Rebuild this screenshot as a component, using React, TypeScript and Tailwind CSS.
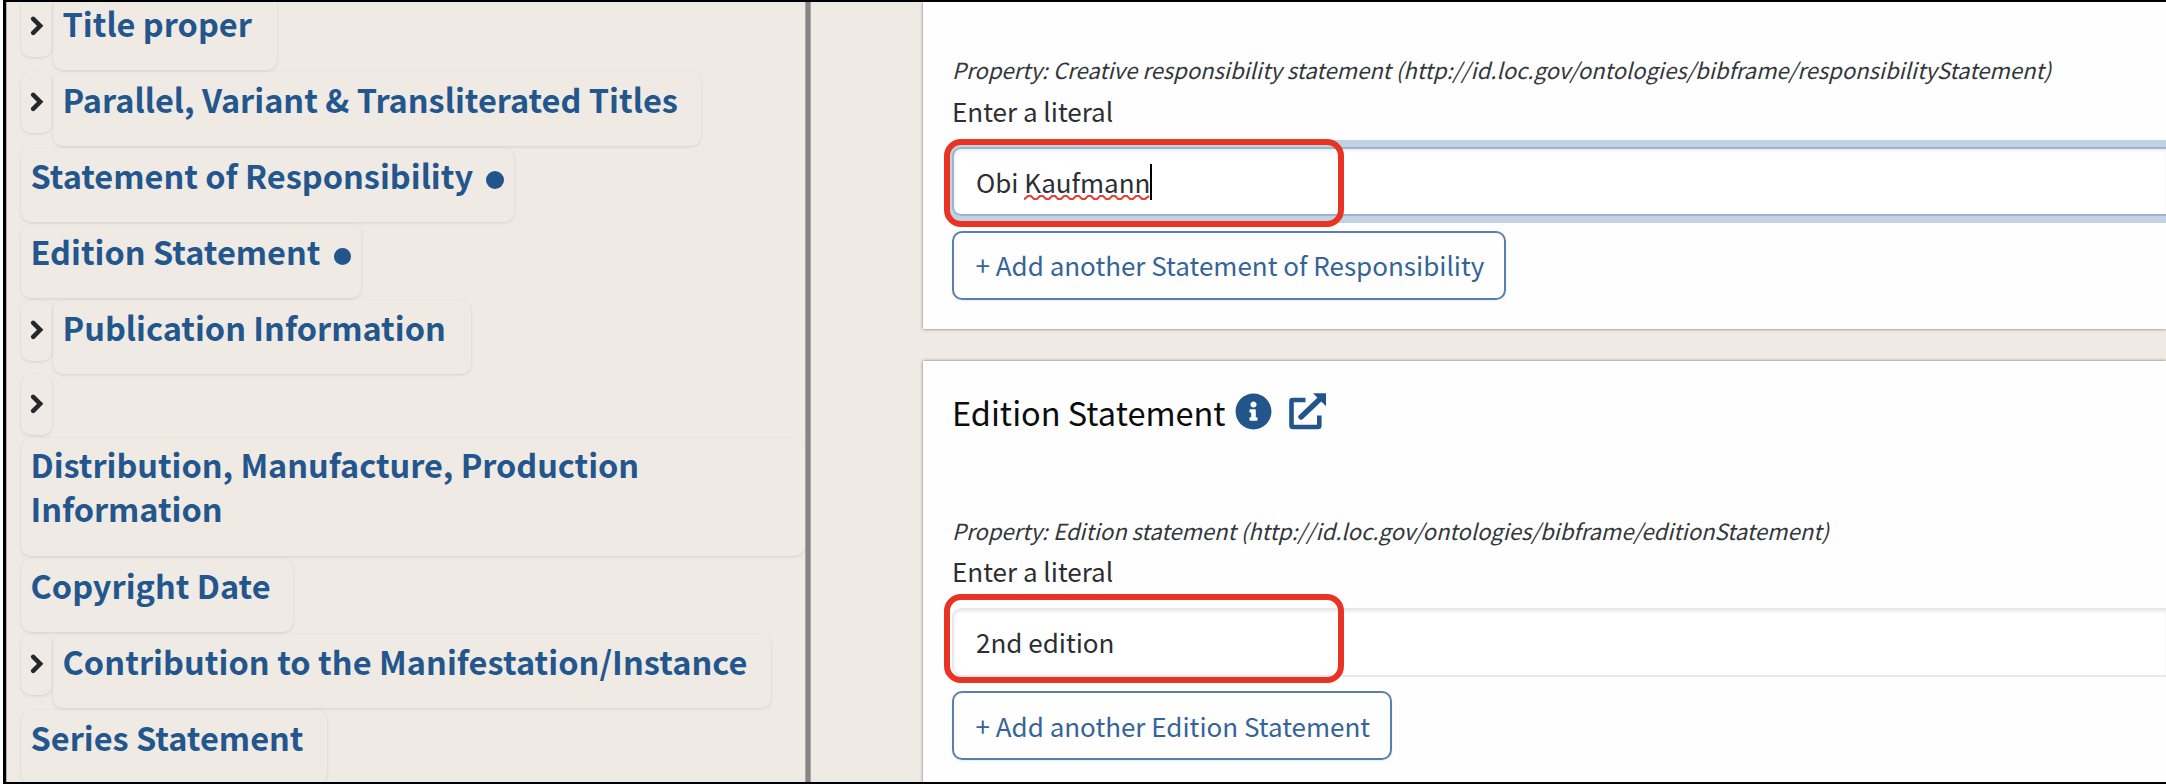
import type { ReactNode } from "react";
import { FaInfoCircle } from "react-icons/fa";

const itemShadow = "shadow-[0_1px_3px_rgba(60,50,40,0.13)]";

function Chevron() {
  return (
    <div className={`flex h-[61px] w-[31px] shrink-0 items-start rounded-[10px] ${itemShadow}`}>
      <svg className="mt-[20px] ml-[9px] h-[20px] w-[15px]" viewBox="0 0 15 20">
        <path d="M3.2 2.8 L10.2 9.800 L3.2 16.800" fill="none" stroke="#24282c" strokeWidth="4.500" strokeLinecap="round" strokeLinejoin="miter" />
      </svg>
    </div>
  );
}

function NavItem({ width, arrow, dot, children }: { width: string; arrow?: boolean; dot?: boolean; children: ReactNode }) {
  return (
    <div className="flex h-[76.15px] items-start gap-px">
      {arrow && <Chevron />}
      <div className={`flex h-[74px] ${width} shrink-0 items-start rounded-[10px] pt-[5px] pl-[9.5px] ${itemShadow}`}>
        <span className="whitespace-nowrap">{children}</span>
        {dot && <span className="mt-[18.5px] ml-[13px] size-[17.5px] rounded-full bg-[#22558c]" />}
      </div>
    </div>
  );
}

function Highlight({ top }: { top: string }) {
  return <div className={`pointer-events-none absolute -left-[8px] ${top} h-[88.5px] w-[400px] rounded-[17px] border-[6px] border-[#ea3423]`} />;
}

function Property({ children }: { children: ReactNode }) {
  return (
    <>
      <p className="h-[37.5px] text-[22.05px] leading-[34px] whitespace-nowrap italic text-[#33373b]">{children}</p>
      <p className="text-[26px] leading-[42px] text-[#2b2f33]">Enter a literal</p>
    </>
  );
}

function AddButton({ width, children }: { width: string; children: ReactNode }) {
  return (
    <button className={`mt-[14.5px] flex h-[69px] ${width} items-center rounded-[10px] border-2 border-[#5680ad] pl-[21.5px] text-[26px] leading-[42px] whitespace-nowrap text-[#356498] shadow-[0_1px_2px_rgba(0,0,0,0.08)]`}>
      {children}
    </button>
  );
}

const card = "bg-[#fefefe] pl-[29px] shadow-[0_0_3px_rgba(80,72,50,0.75)]";

export default function App() {
  return (
    <div className="h-[784px] w-full overflow-hidden bg-white pl-[3px] font-['Noto_Sans_CJK_JP','Noto_Sans',sans-serif]">
      <div className="flex h-full overflow-hidden border-y-2 border-l-[3px] border-black bg-[#efeae3]">
        <nav className="h-full w-[799px] shrink-0 overflow-hidden border-l border-[#b5b2ad] pl-[14px] text-[32.5px] leading-[44px] font-bold text-[#24568e]">
          <div className="-mt-[6.3px]">
            <NavItem arrow width="w-[224px]">Title proper</NavItem>
            <NavItem arrow width="w-[648px]">Parallel, Variant &amp; Transliterated Titles</NavItem>
            <NavItem dot width="w-[493px]">Statement of Responsibility</NavItem>
            <NavItem dot width="w-[340px]">Edition Statement</NavItem>
            <NavItem arrow width="w-[418px]">Publication Information</NavItem>
            <div className="-mt-[2.5px] flex h-[63.8px] items-start">
              <Chevron />
            </div>
            <div className="h-[120px]">
              <div className={`h-[118px] w-[784px] rounded-[10px] pt-[4.5px] pl-[9.5px] tracking-[-0.04px] ${itemShadow}`}>
                Distribution, Manufacture, Production
                <br />
                Information
              </div>
            </div>
            <NavItem width="w-[272px]">Copyright Date</NavItem>
            <NavItem arrow width="w-[718px]"><span className="tracking-[0.05px]">Contribution to the Manifestation/Instance</span></NavItem>
            <NavItem width="w-[306px]">Series Statement</NavItem>
          </div>
        </nav>
        <div className="h-full w-[6px] shrink-0 border-x border-[#a9a7a3] bg-[#858585]" />
        <main className="ml-[112px] min-w-0 flex-1">
          <section className={`h-[326.7px] pt-[50.4px] ${card}`}>
            <Property>Property: Creative responsibility statement (http://id.loc.gov/ontologies/bibframe/responsibilityStatement)</Property>
            <div className="relative mt-[15.6px]">
              <div className="flex h-[69px] items-center rounded-l-[9px] border-2 border-r-0 border-[#9ab5cd] bg-white pl-[22px] text-[26px] leading-[42px] text-[#2b2f33] shadow-[0_0_0_7px_#c3d2e2,inset_0_2px_3px_rgba(0,0,0,0.07)]">
                <span className="whitespace-pre">Obi </span>
                <span className="relative">
                  Kaufmann
                  <svg className="absolute top-[33px] left-0 h-[7px] w-full" viewBox="0 0 126 7" preserveAspectRatio="none">
                    <path d="M0 5.5 L4 2 L7 2 L10 5 L13 5 L16 2 L19 2 L22 5 L25 5 L28 2 L31 2 L34 5 L37 5 L40 2 L43 2 L46 5 L49 5 L52 2 L55 2 L58 5 L61 5 L64 2 L67 2 L70 5 L73 5 L76 2 L79 2 L82 5 L85 5 L88 2 L91 2 L94 5 L97 5 L100 2 L103 2 L106 5 L109 5 L112 2 L115 2 L118 5 L121 5 L125 2" fill="none" stroke="#e8413a" strokeWidth="2.2" />
                  </svg>
                </span>
                <span className="h-[36px] w-[1.5px] bg-black" />
              </div>
              <Highlight top="-top-[8.5px]" />
            </div>
            <AddButton width="w-[554px]">+ Add another Statement of Responsibility</AddButton>
          </section>
          <section className={`mt-[32.3px] h-[440px] pt-[27.5px] ${card}`}>
            <h2 className="flex h-[124.2px] items-start text-[32.5px] leading-[48px] text-[#0c0c0e]">
              Edition Statement
              <FaInfoCircle className="mt-[5px] ml-[9px] size-[37px] text-[#22558c]" />
              <svg className="mt-[5px] ml-[17.5px] h-[37px] w-[38px]" viewBox="0 0 38 37">
                <path d="M16.500 7H3.500Q2.500 7 2.500 8V32.500Q2.500 34 4 34H29Q30.300 34 30.300 32.700V22.500" fill="none" stroke="#22558c" strokeWidth="4.600" />
                <path d="M12 24L31 6" fill="none" stroke="#22558c" strokeWidth="5.400" strokeLinecap="round" />
                <path d="M24 .3H37V13.200Z" fill="#22558c" />
              </svg>
            </h2>
            <Property>Property: Edition statement (http://id.loc.gov/ontologies/bibframe/editionStatement)</Property>
            <div className="relative mt-[15.6px]">
              <div className="flex h-[69px] items-center rounded-l-[9px] border-2 border-r-0 border-[#e6e9ec] bg-white pl-[22px] text-[26px] leading-[42px] text-[#2b2f33] shadow-[inset_0_2px_3px_rgba(0,0,0,0.07)]">
                2nd edition
              </div>
              <Highlight top="-top-[13.5px]" />
            </div>
            <AddButton width="w-[440px]">+ Add another Edition Statement</AddButton>
          </section>
        </main>
      </div>
    </div>
  );
}
